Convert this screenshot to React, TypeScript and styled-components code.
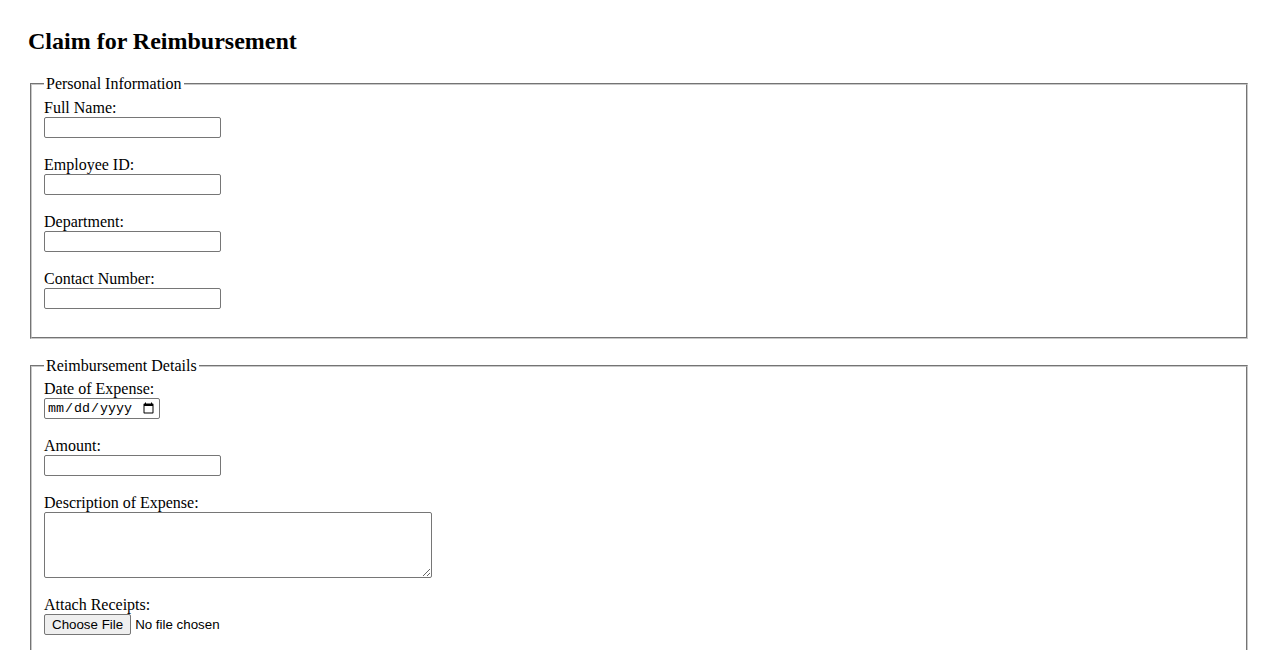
import { createGlobalStyle } from 'styled-components';
import styled from 'styled-components';

// 경비 청구 폼 - 브라우저 기본 스타일 그대로

const GlobalStyle = createGlobalStyle`
  body {
    margin: 8px;
    padding: 20px;
    font-family: 'Liberation Serif', 'Times New Roman', serif;
    font-size: 16px;
    color: #000000;
    background: #ffffff;
  }
`;

const personalFields = [
  { id: 'fullName', label: 'Full Name:' },
  { id: 'employeeId', label: 'Employee ID:' },
  { id: 'department', label: 'Department:' },
  { id: 'contact', label: 'Contact Number:' },
];

const App = () => {
  return (
    <>
      <GlobalStyle />
      <Title>Claim for Reimbursement</Title>
      <form onSubmit={(e) => e.preventDefault()}>
        <Section>
          <Legend>Personal Information</Legend>
          {personalFields.map((f) => (
            <Group key={f.id}>
              <Label htmlFor={f.id}>{f.label}</Label>
              <br />
              <TextInput type="text" id={f.id} />
              <br />
              <br />
            </Group>
          ))}
        </Section>
        <Section>
          <Legend>Reimbursement Details</Legend>
          <Group>
            <Label htmlFor="date">Date of Expense:</Label>
            <br />
            <DateInput type="date" id="date" />
            <br />
            <br />
          </Group>
          <Group>
            <Label htmlFor="amount">Amount:</Label>
            <br />
            <TextInput type="text" id="amount" />
            <br />
            <br />
          </Group>
          <Group>
            <Label htmlFor="desc">Description of Expense:</Label>
            <br />
            <TextArea id="desc" />
            <br />
            <br />
          </Group>
          <Group>
            <Label htmlFor="receipts">Attach Receipts:</Label>
            <br />
            <FileInput type="file" id="receipts" />
            <br />
            <br />
          </Group>
        </Section>
      </form>
    </>
  );
};

const Title = styled.h2`
  font-size: 24px;
  font-weight: 700;
  line-height: 27px;
  margin: 0 0 20px 0;
`;
const Section = styled.fieldset`
  margin: 0 2px 18px 2px;
  padding: 0.35em 0.75em 0.625em;
  border: 2px groove #c8c8c8;
`;
const Legend = styled.legend`
  padding: 0 2px;
  line-height: 18px;
`;
const Group = styled.div`
  line-height: 18px;
`;
const Label = styled.label`
  font-size: 16px;
`;
const TextInput = styled.input`
  box-sizing: border-box;
  width: 177px;
  height: 21px;
  font-family: 'Liberation Sans', Arial, sans-serif;
  font-size: 13.33px;
  border: 1px solid #767676;
  border-radius: 2px;
  padding: 1px 2px;
  margin: 0;
`;
const DateInput = styled.input`
  box-sizing: border-box;
  width: 116px;
  height: 21px;
  font-family: 'Liberation Mono', monospace;
  font-size: 13.33px;
  border: 1px solid #767676;
  border-radius: 2px;
  padding: 1px 2px;
  margin: 0;
`;
const TextArea = styled.textarea`
  box-sizing: border-box;
  width: 388px;
  height: 66px;
  font-family: 'Liberation Mono', monospace;
  font-size: 13.33px;
  border: 1px solid #767676;
  border-radius: 2px;
  padding: 2px;
  margin: 0;
  vertical-align: bottom;
`;
const FileInput = styled.input`
  font-family: 'Liberation Sans', Arial, sans-serif;
  font-size: 13.33px;
  margin: 0;
  &::file-selector-button {
    font-family: 'Liberation Sans', Arial, sans-serif;
    font-size: 13.33px;
    height: 21px;
    padding: 1px 7px;
    margin-right: 4px;
    border: 1px solid #767676;
    border-radius: 2px;
    background: #efefef;
  }
`;

export default App;
